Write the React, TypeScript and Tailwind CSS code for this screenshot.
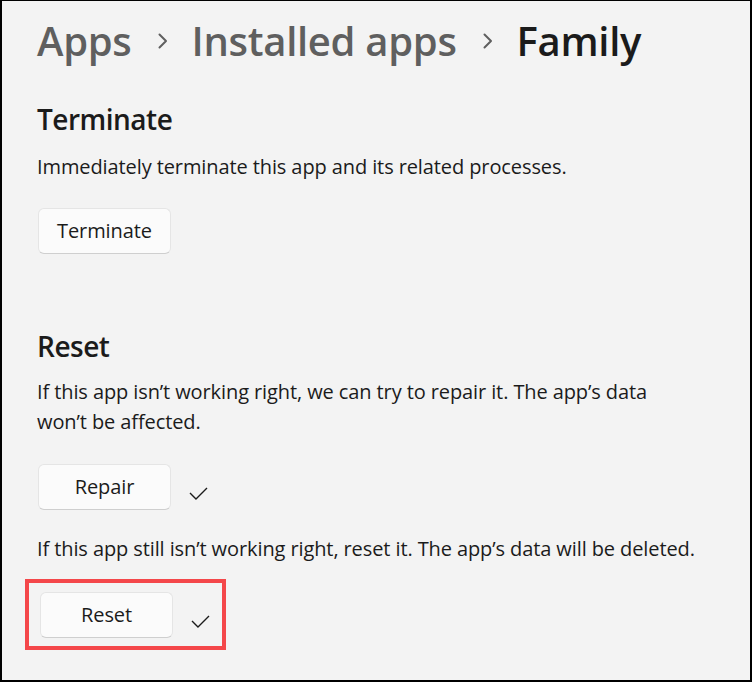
import React from 'react';

const FONT = "font-['Segoe_UI','Open_Sans',sans-serif]";

function Chevron() {
  return (
    <svg width="12" height="16" viewBox="0 0 12 16" className="shrink-0">
      <path d="M2.5 1.5 L9 8 L2.5 14.5" fill="none" stroke="#5f5f5f" strokeWidth="2" strokeLinecap="round" strokeLinejoin="round" />
    </svg>
  );
}

function Check() {
  return (
    <svg width="19" height="13" viewBox="0 0 19 13" className="shrink-0 mt-3">
      <path d="M1 6 L7 12 L18 1" fill="none" stroke="#1b1b1b" strokeWidth="1.4" />
    </svg>
  );
}

function Button({ label }: { label: string }) {
  return (
    <button className="w-[133px] h-[46px] rounded-[6px] bg-[#fbfbfb] border border-[#e5e5e5] border-b-[#cfcfcf] text-[20px] tracking-[-0.1px] text-[#1b1b1b] leading-none">
      {label}
    </button>
  );
}

export default function App() {
  return (
    <div className={`${FONT} w-[752px] h-[682px] bg-[#f3f3f3] border-t border-x-2 border-b-2 border-black overflow-hidden`}>
      <div className="pl-[35px] pt-[14px]">
        {/* breadcrumb */}
        <div className="flex items-center h-[52px] text-[40px] font-semibold leading-[52px] tracking-[-0.3px]">
          <span className="text-[#5f5f5f]">Apps</span>
          <span className="ml-[25px] mr-[23px] flex items-center"><Chevron /></span>
          <span className="text-[#5f5f5f]">Installed apps</span>
          <span className="ml-[25px] mr-[23px] flex items-center"><Chevron /></span>
          <span className="text-[#1b1b1b]">Family</span>
        </div>

        {/* Terminate */}
        <h2 className="mt-[32px] text-[28px] font-semibold leading-[40px] tracking-[-0.5px] text-[#1b1b1b]">Terminate</h2>
        <p className="mt-[13px] text-[20px] leading-[30px] tracking-[-0.1px] text-[#1b1b1b]">
          Immediately terminate this app and its related processes.
        </p>
        <div className="mt-[26px] pl-[1px]">
          <Button label="Terminate" />
        </div>

        {/* Reset */}
        <h2 className="mt-[72px] text-[28px] font-semibold leading-[40px] tracking-[-0.5px] text-[#1b1b1b]">Reset</h2>
        <p className="mt-[11px] w-[650px] text-[20px] leading-[30px] tracking-[-0.1px] text-[#1b1b1b]">
          If this app isn’t working right, we can try to repair it. The app’s data won’t be affected.
        </p>
        <div className="mt-[27px] pl-[1px] flex items-center gap-[18px]">
          <Button label="Repair" />
          <Check />
        </div>
        <p className="mt-[24px] text-[20px] leading-[30px] tracking-[-0.1px] text-[#1b1b1b]">
          If this app still isn’t working right, reset it. The app’s data will be deleted.
        </p>
        <div className="mt-[15px] -ml-[12px] w-[201px] border-4 border-[#f4474a] pt-[9px] pb-[8px] pl-[11px] flex items-center gap-[18px]">
          <Button label="Reset" />
          <Check />
        </div>
      </div>
    </div>
  );
}
